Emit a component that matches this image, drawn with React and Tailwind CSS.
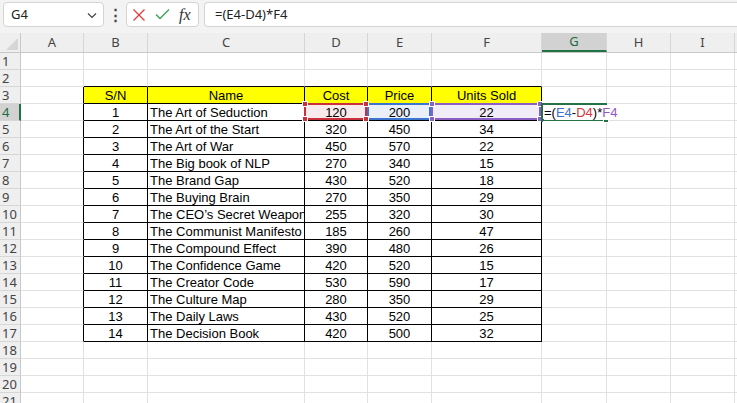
import React from "react";

const cols = [
  { key: "A", w: "w-[63px]" },
  { key: "B", w: "w-[64px]" },
  { key: "C", w: "w-[157px]" },
  { key: "D", w: "w-[63px]" },
  { key: "E", w: "w-[64px]" },
  { key: "F", w: "w-[110px]" },
  { key: "G", w: "w-[65px]" },
  { key: "H", w: "w-[64px]" },
  { key: "I", w: "w-[64px]" },
];

const books = [
  [1, "The Art of Seduction", 120, 200, 22],
  [2, "The Art of the Start", 320, 450, 34],
  [3, "The Art of War", 450, 570, 22],
  [4, "The Big book of NLP", 270, 340, 15],
  [5, "The Brand Gap", 430, 520, 18],
  [6, "The Buying Brain", 270, 350, 29],
  [7, "The CEO’s Secret Weapon", 255, 320, 30],
  [8, "The Communist Manifesto", 185, 260, 47],
  [9, "The Compound Effect", 390, 480, 26],
  [10, "The Confidence Game", 420, 520, 15],
  [11, "The Creator Code", 530, 590, 17],
  [12, "The Culture Map", 280, 350, 29],
  [13, "The Daily Laws", 430, 520, 25],
  [14, "The Decision Book", 420, 500, 32],
];

const Handle = ({ pos, color }) => (
  <span className={`absolute w-[6px] h-[6px] border border-white z-10 ${pos} ${color}`} />
);

const RangeBox = ({ border, fill, handle }) => (
  <div className={`absolute -left-[1px] -top-[1px] right-0 bottom-0 border-2 ${border} ${fill}`}>
    {handle && (
      <>
        <Handle pos="-left-[4px] -top-[4px]" color={handle} />
        <Handle pos="-right-[4px] -top-[4px]" color={handle} />
        <Handle pos="-left-[4px] -bottom-[4px]" color={handle} />
        <Handle pos="-right-[4px] -bottom-[4px]" color={handle} />
      </>
    )}
  </div>
);

const getCell = (row, col) => {
  if (row === 3) {
    const head = { B: "S/N", C: "Name", D: "Cost", E: "Price", F: "Units Sold" };
    if (head[col]) return { text: head[col], align: "center", bg: "bg-[#ffff00]" };
  }
  if (row >= 4 && row <= 17) {
    const b = books[row - 4];
    const map = { B: b[0], C: b[1], D: b[2], E: b[3], F: b[4] };
    if (map[col] !== undefined)
      return { text: map[col], align: col === "C" ? "left" : "center" };
  }
  return null;
};

const inTable = (row, col) => row >= 3 && row <= 17 && "BCDEF".includes(col);

const Cell = ({ row, col, w }) => {
  const c = getCell(row, col);
  const rightBlack = inTable(row, col) || (col === "A" && row >= 3 && row <= 17);
  const bottomBlack = inTable(row, col) || (row === 2 && "BCDEF".includes(col));
  const cls = [
    "relative h-[17px] shrink-0 border-r border-b",
    w,
    rightBlack ? "border-r-black" : "border-r-[#e1e1e1]",
    bottomBlack ? "border-b-black" : "border-b-[#e1e1e1]",
    c && c.bg ? c.bg : "",
  ].join(" ");

  const isG4 = row === 4 && col === "G";

  return (
    <div className={cls}>
      {row === 4 && col === "D" && (
        <RangeBox border="border-[#c9303b]" fill="bg-[#f9eaeb]" handle="bg-[#c9303b]" />
      )}
      {row === 4 && col === "E" && <RangeBox border="border-[#3d74cf]" fill="bg-[#eaf0fa]" />}
      {row === 4 && col === "F" && (
        <RangeBox border="border-[#8c5fc4]" fill="bg-[#f0edf8]" handle="bg-[#8c5fc4]" />
      )}
      {isG4 && (
        <>
          <div className="absolute -left-[1px] -top-[1px] w-[2px] h-[19px] bg-[#217346] z-10" />
          <div className="absolute -left-[1px] -top-[1px] w-[66px] h-[2px] bg-[#217346] z-10" />
          <div className="absolute -left-[1px] -bottom-[1px] w-[62px] h-[2px] bg-[#217346] z-10" />
          <div className="absolute -right-[3px] -bottom-[3px] w-[6px] h-[6px] bg-[#217346] border border-white z-10" />
          <div className="absolute left-[2px] top-[1px] h-[15px] leading-[15px] whitespace-nowrap z-20 bg-white pr-[1px]">
            <span className="text-black">=(</span>
            <span className="text-[#3d6fd3]">E4</span>
            <span className="text-black">-</span>
            <span className="text-[#d5343f]">D4</span>
            <span className="text-black">)*</span>
            <span className="text-[#9157c9]">F4</span>
          </div>
        </>
      )}
      {c && (
        <div
          className={`relative z-[5] h-full overflow-hidden whitespace-nowrap leading-[17px] text-black ${
            c.align === "center" ? "text-center" : "text-left pl-[2px]"
          }`}
        >
          {c.text}
        </div>
      )}
    </div>
  );
};

const FormulaBar = () => (
  <div className="h-[33px] bg-[#f3f3f3] flex items-start pt-[2px] pl-[3px]">
    <div className="w-[101px] h-[25px] bg-white border border-[#d4d4d4] rounded-[4px] flex items-center justify-between pl-[7px] pr-[5px] text-[13px] text-[#222]">
      <span>G4</span>
      <svg width="12" height="12" viewBox="0 0 12 12" fill="none" stroke="#444" strokeWidth="1.2">
        <path d="M2 4.5 L6 8.5 L10 4.5" />
      </svg>
    </div>
    <div className="w-[22px] h-[25px] flex items-center justify-center text-[#444] text-[15px] font-bold">⋮</div>
    <div className="w-[73px] h-[25px] bg-white border border-[#d4d4d4] rounded-[4px] flex items-center px-[5px] gap-[9px]">
      <svg width="14" height="14" viewBox="0 0 14 14" stroke="#e0393e" strokeWidth="1.3" fill="none">
        <path d="M1.5 1.5 L12.5 12.5 M12.5 1.5 L1.5 12.5" />
      </svg>
      <svg width="15" height="13" viewBox="0 0 15 13" stroke="#3aa15a" strokeWidth="1.3" fill="none">
        <path d="M1 6.5 L5 10.5 L14 1.5" />
      </svg>
      <span className="text-[16px] italic text-[#333] leading-none" style={{ fontFamily: '"Liberation Serif", serif' }}>
        fx
      </span>
    </div>
    <div className="ml-[5px] flex-1 h-[25px] bg-white border border-r-0 border-[#d4d4d4] rounded-l-[4px] flex items-center pl-[10px] text-[13px] text-[#222]">
      =(E4-D4)*F4
    </div>
  </div>
);

const App = () => {
  const rows = Array.from({ length: 21 }, (_, i) => i + 1);
  const uiFont = { fontFamily: '"Noto Sans", "Open Sans", sans-serif' };
  return (
    <div
      className="w-[737px] h-[403px] overflow-hidden bg-white"
      style={{ fontFamily: '"Liberation Sans", Arial, sans-serif' }}
    >
      <div style={uiFont}>
        <FormulaBar />
      </div>
      <div className="flex h-[20px] bg-[#efefef] border-b border-[#c8c8c8]" style={uiFont}>
        <div className="relative w-[21px] shrink-0 border-r border-[#c8c8c8]">
          <svg className="absolute right-[2px] bottom-[2px]" width="12" height="12" viewBox="0 0 12 12">
            <path d="M12 0 L12 12 L0 12 Z" fill="#d6d6d6" />
          </svg>
        </div>
        {cols.map((c) => (
          <div
            key={c.key}
            className={`${c.w} shrink-0 h-full flex items-center justify-center text-[13px] border-r border-[#d6d6d6] ${
              c.key === "G" ? "bg-[#d2d2d2] text-[#1e6b41] border-b-2 border-b-[#217346]" : "text-[#444]"
            }`}
          >
            {c.key}
          </div>
        ))}
        <div className="flex-1" />
      </div>
      {rows.map((r) => (
        <div key={r} className="flex text-[13px]">
          <div
            className={`w-[21px] h-[17px] shrink-0 leading-[17px] pl-[2px] text-[13px] border-b ${
              r === 4
                ? "bg-[#d2d2d2] text-[#1e6b41] border-r-2 border-r-[#217346] border-b-[#d6d6d6]"
                : "bg-[#efefef] text-[#444] border-r border-r-[#c8c8c8] border-b-[#d6d6d6]"
            }`}
            style={uiFont}
          >
            {r}
          </div>
          {cols.map((c) => (
            <Cell key={c.key} row={r} col={c.key} w={c.w} />
          ))}
          <div className="flex-1 h-[17px] border-b border-[#e1e1e1]" />
        </div>
      ))}
    </div>
  );
};

export default App;
